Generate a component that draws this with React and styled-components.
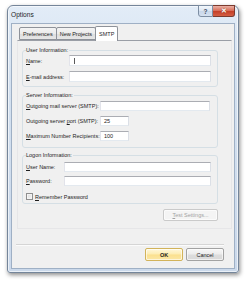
import React from 'react';
import styled, { createGlobalStyle } from 'styled-components';

const Global = createGlobalStyle`
  html, body { margin: 0; padding: 0; background: #ffffff; }
  body { font-family: "Liberation Sans", Arial, sans-serif; }
  * { box-sizing: border-box; }
`;

const FS = '5.5px';

const Desktop = styled.div`
  width: 247px;
  height: 283px;
  padding: 5px 0 0 7px;
`;

const Window = styled.div`
  width: 232px;
  height: 268px;
  border: 1px solid #74859a;
  border-radius: 6px 6px 3px 3px;
  background: linear-gradient(180deg, #e2ecf7 0%, #d4e1f0 30%, #cbd9eb 100%);
  box-shadow: 1px 2px 4px rgba(0, 0, 0, 0.45), inset 0 0 0 1px rgba(255, 255, 255, 0.6);
  padding: 0 3px 3px 3px;
  display: flex;
  flex-direction: column;
`;

const TitleBar = styled.div`
  height: 17px;
  display: flex;
  align-items: flex-start;
`;

const Title = styled.span`
  flex: 1;
  font-size: 6.6px;
  line-height: 17px;
  color: #1e1e1e;
`;

const CaptionButton = styled.div`
  margin-top: -1px;
  height: 12px;
  width: ${(p) => (p.$close ? 22 : 15)}px;
  display: flex;
  align-items: center;
  justify-content: center;
  font-size: ${(p) => (p.$close ? 7 : 6.5)}px;
  font-weight: bold;
  color: ${(p) => (p.$close ? '#ffffff' : '#3b4a5e')};
  border: 1px solid ${(p) => (p.$close ? '#7b3a2f' : '#7d8ea3')};
  border-left-width: ${(p) => (p.$close ? 0 : 1)}px;
  border-radius: ${(p) => (p.$close ? '0 0 3px 0' : '0 0 0 3px')};
  background: ${(p) =>
    p.$close
      ? 'linear-gradient(180deg, #eab1a5 0%, #d9705c 45%, #c5412a 55%, #d45e44 100%)'
      : 'linear-gradient(180deg, #f3f7fb 0%, #dde7f3 45%, #c9d7ea 55%, #d5e1f0 100%)'};
  text-shadow: ${(p) => (p.$close ? '0 0 1px #6a1d10' : 'none')};
`;

const Client = styled.div`
  flex: 1;
  background: #f0f0f0;
  border: 1px solid #9fb0c5;
  display: flex;
  flex-direction: column;
`;

const TabStrip = styled.div`
  height: 16px;
  padding-left: 7px;
  display: flex;
  align-items: flex-end;
`;

const Tab = styled.div`
  position: relative;
  z-index: ${(p) => (p.$active ? 2 : 1)};
  height: ${(p) => (p.$active ? 15 : 13)}px;
  margin-bottom: ${(p) => (p.$active ? -1 : 0)}px;
  margin-right: -1px;
  padding: 0 3px;
  display: flex;
  align-items: center;
  font-size: ${FS};
  color: #1e1e1e;
  border: 1px solid #8e9299;
  border-bottom: ${(p) => (p.$active ? 'none' : '1px solid #8e9299')};
  border-radius: 2px 2px 0 0;
  background: ${(p) => (p.$active ? '#ffffff' : 'linear-gradient(180deg, #f4f4f4 0%, #ebebeb 50%, #dddddd 51%, #e6e6e6 100%)')};
`;

const Panel = styled.div`
  height: 189px;
  margin: 0 2px 0 5px;
  border: 1px solid #e6e6e8;
  border-top-color: #9a9ea6;
  padding: 0 0 0 4px;
`;

const Column = styled.div`
  width: 196px;
  display: flex;
  flex-direction: column;
  align-items: stretch;
`;

const Group = styled.div`
  margin-top: ${(p) => p.$top}px;
  border: 1px solid #d5dfe5;
  border-radius: 3px;
  padding: 0 6px ${(p) => p.$bottom}px 3px;
  display: flex;
  flex-direction: column;
  gap: ${(p) => p.$gap}px;
`;

const Legend = styled.span`
  align-self: flex-start;
  margin: -5px 0 ${(p) => p.$after}px 0;
  padding: 0 1px 0 0;
  background: #f0f0f0;
  font-size: ${FS};
  line-height: 9px;
  color: #1e1e1e;
`;

const Row = styled.div`
  display: flex;
  align-items: center;
  height: ${(p) => p.$h}px;
`;

const FieldLabel = styled.span`
  width: ${(p) => p.$w}px;
  flex: none;
  font-size: ${FS};
  color: #1e1e1e;
  white-space: nowrap;
`;

const TextBox = styled.div`
  height: 100%;
  width: ${(p) => (p.$width ? `${p.$width}px` : 'auto')};
  flex: ${(p) => (p.$width ? 'none' : 1)};
  margin-right: ${(p) => p.$mr || 0}px;
  background: #ffffff;
  border: 1px solid;
  border-color: #abadb3 #dbdfe6 #e3e9ef #e2e3ea;
  font-size: ${FS};
  color: #1e1e1e;
  padding-left: 3px;
  display: flex;
  align-items: center;
`;

const Caret = styled.span`
  width: 1px;
  height: 6px;
  background: #5a5a5a;
  margin-left: 1px;
`;

const CheckRow = styled.label`
  display: flex;
  align-items: center;
  gap: 2px;
  height: 9px;
  margin-top: 2px;
  font-size: ${FS};
  color: #1e1e1e;
`;

const CheckBox = styled.span`
  width: 7px;
  height: 7px;
  border: 1px solid #8f8f8f;
  background: linear-gradient(135deg, #dcdcdc 0%, #f6f6f6 100%);
  box-shadow: inset 0 0 0 1px #f4f4f4;
`;

const PushButton = styled.div`
  width: ${(p) => p.$w}px;
  height: ${(p) => p.$h}px;
  display: flex;
  align-items: center;
  justify-content: center;
  font-size: ${FS};
  font-weight: ${(p) => (p.$default ? 'bold' : 'normal')};
  color: ${(p) => (p.$disabled ? '#a3a3a3' : '#1e1e1e')};
  border: 1px solid ${(p) => (p.$default ? '#d2b35a' : p.$disabled ? '#cacaca' : '#a2a2a2')};
  border-radius: 2px;
  background: ${(p) =>
    p.$default
      ? 'linear-gradient(180deg, #fff8dc 0%, #fdecb0 48%, #fbe08e 52%, #fbe7a4 100%)'
      : p.$disabled
      ? '#f4f4f4'
      : 'linear-gradient(180deg, #f7f7f7 0%, #ececec 48%, #dddddd 52%, #d9d9d9 100%)'};
  box-shadow: inset 0 0 0 1px rgba(255, 255, 255, 0.6);
`;

const TestWrap = styled.div`
  margin-top: 5px;
  align-self: flex-end;
`;

const Footer = styled.div`
  margin: 15px 10px 0 4px;
  border-top: 1px solid #d5d5d5;
  box-shadow: inset 0 1px 0 #fbfbfb;
  padding-top: 3px;
  display: flex;
  justify-content: flex-end;
  gap: 3px;
`;

export default function App() {
  return (
    <>
      <Global />
      <Desktop>
        <Window>
          <TitleBar>
            <Title>Options</Title>
            <CaptionButton>?</CaptionButton>
            <CaptionButton $close>✕</CaptionButton>
          </TitleBar>
          <Client>
            <TabStrip>
              <Tab>Preferences</Tab>
              <Tab>New Projects</Tab>
              <Tab $active>SMTP</Tab>
            </TabStrip>
            <Panel>
              <Column>
                <Group $top={9} $bottom={4} $gap={5}>
                  <Legend $after={-5}>User Information:</Legend>
                  <Row $h={11}>
                    <FieldLabel $w={43}><u>N</u>ame:</FieldLabel>
                    <TextBox><Caret /></TextBox>
                  </Row>
                  <Row $h={11}>
                    <FieldLabel $w={43}><u>E</u>-mail address:</FieldLabel>
                    <TextBox />
                  </Row>
                </Group>
                <Group $top={8} $bottom={6} $gap={5}>
                  <Legend $after={-4}>Server Information:</Legend>
                  <Row $h={10}>
                    <FieldLabel $w={74}><u>O</u>utgoing mail server (SMTP):</FieldLabel>
                    <TextBox $mr={1} />
                  </Row>
                  <Row $h={10}>
                    <FieldLabel $w={74}>Outgoing server <u>p</u>ort (SMTP):</FieldLabel>
                    <TextBox $width={29}>25</TextBox>
                  </Row>
                  <Row $h={10}>
                    <FieldLabel $w={74}><u>M</u>aximum Number Recipients:</FieldLabel>
                    <TextBox $width={29}>100</TextBox>
                  </Row>
                </Group>
                <Group $top={7} $bottom={2} $gap={4}>
                  <Legend $after={-2}>Logon Information:</Legend>
                  <Row $h={10}>
                    <FieldLabel $w={38}><u>U</u>ser Name:</FieldLabel>
                    <TextBox />
                  </Row>
                  <Row $h={10}>
                    <FieldLabel $w={38}><u>P</u>assword:</FieldLabel>
                    <TextBox />
                  </Row>
                  <CheckRow>
                    <CheckBox />
                    <span><u>R</u>emember Password</span>
                  </CheckRow>
                </Group>
                <TestWrap>
                  <PushButton $w={55} $h={12} $disabled>
                    <span><u>T</u>est Settings...</span>
                  </PushButton>
                </TestWrap>
              </Column>
            </Panel>
            <Footer>
              <PushButton $w={38} $h={13} $default>OK</PushButton>
              <PushButton $w={38} $h={13}>Cancel</PushButton>
            </Footer>
          </Client>
        </Window>
      </Desktop>
    </>
  );
}
